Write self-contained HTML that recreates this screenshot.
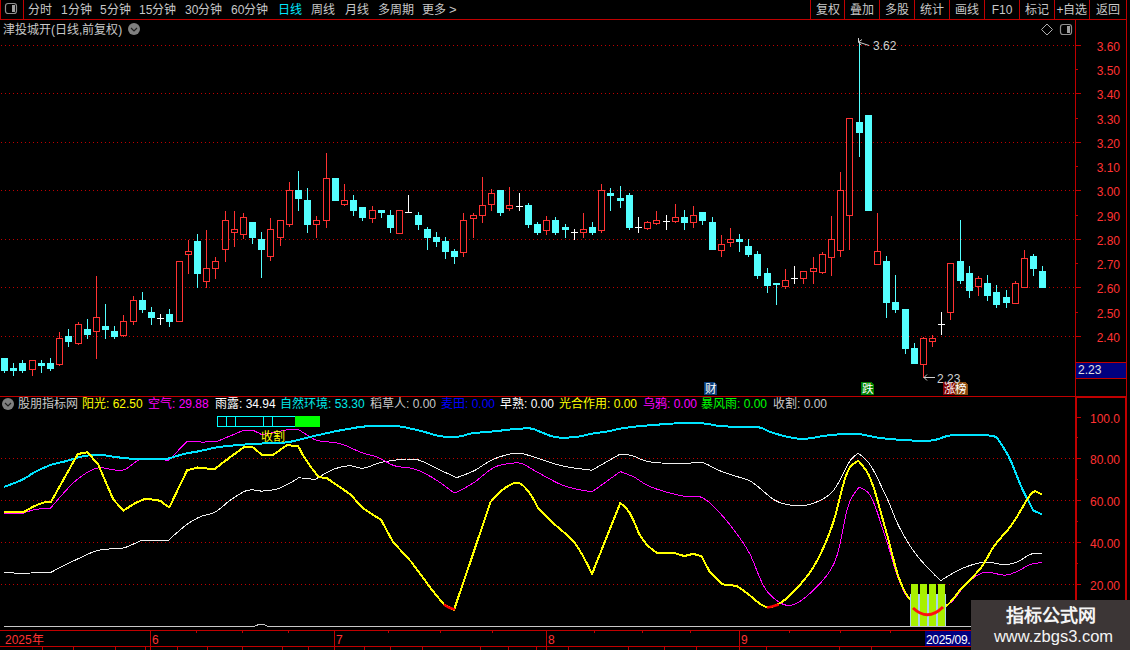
<!DOCTYPE html><html lang="zh-CN"><head><meta charset="utf-8"><style>
html,body{margin:0;padding:0;background:#000;width:1130px;height:650px;overflow:hidden}
body{position:relative;font-family:"Liberation Sans",sans-serif;font-size:12px}
svg{position:absolute;left:0;top:0}
.t{position:absolute;white-space:nowrap;line-height:12px;font-size:12px}
</style></head><body>
<svg width="1130" height="650" viewBox="0 0 1130 650" shape-rendering="crispEdges">
<rect x="0" y="19" width="1127" height="1" fill="#c00000"/>
<rect x="0" y="0" width="1" height="19" fill="#c00000"/>
<rect x="23" y="0" width="1" height="19" fill="#c00000"/>
<rect x="810" y="0" width="1" height="19" fill="#c00000"/>
<rect x="844" y="0" width="1" height="19" fill="#c00000"/>
<rect x="879" y="0" width="1" height="19" fill="#c00000"/>
<rect x="914" y="0" width="1" height="19" fill="#c00000"/>
<rect x="949" y="0" width="1" height="19" fill="#c00000"/>
<rect x="984" y="0" width="1" height="19" fill="#c00000"/>
<rect x="1019" y="0" width="1" height="19" fill="#c00000"/>
<rect x="1054" y="0" width="1" height="19" fill="#c00000"/>
<rect x="1089" y="0" width="1" height="19" fill="#c00000"/>
<rect x="1126" y="0" width="1" height="19" fill="#c00000"/>
<rect x="1126" y="19" width="1" height="631" fill="#c00000"/>
<rect x="1075" y="19" width="1" height="627" fill="#c00000"/>
<rect x="1076" y="397" width="50" height="1" fill="#c00000"/>
<rect x="1076" y="397" width="1" height="233" fill="#c00000"/>
<rect x="1125" y="397" width="1" height="233" fill="#c00000"/>
<rect x="0" y="396" width="1127" height="1" fill="#c00000"/>
<rect x="0" y="630" width="1127" height="1" fill="#c00000"/>
<rect x="0" y="646" width="1127" height="1" fill="#c00000"/>
<defs><pattern id="dp" x="1" y="0" width="4" height="1" patternUnits="userSpaceOnUse"><rect width="1" height="1" fill="#c00000"/></pattern></defs>
<rect x="1" y="45" width="1074" height="1" fill="url(#dp)"/>
<rect x="1075" y="45" width="6" height="1" fill="#c00000"/>
<rect x="1075" y="69" width="3" height="1" fill="#c00000"/>
<rect x="1" y="93" width="1074" height="1" fill="url(#dp)"/>
<rect x="1075" y="93" width="6" height="1" fill="#c00000"/>
<rect x="1075" y="118" width="3" height="1" fill="#c00000"/>
<rect x="1" y="142" width="1074" height="1" fill="url(#dp)"/>
<rect x="1075" y="142" width="6" height="1" fill="#c00000"/>
<rect x="1075" y="166" width="3" height="1" fill="#c00000"/>
<rect x="1" y="190" width="1074" height="1" fill="url(#dp)"/>
<rect x="1075" y="190" width="6" height="1" fill="#c00000"/>
<rect x="1075" y="215" width="3" height="1" fill="#c00000"/>
<rect x="1" y="239" width="1074" height="1" fill="url(#dp)"/>
<rect x="1075" y="239" width="6" height="1" fill="#c00000"/>
<rect x="1075" y="263" width="3" height="1" fill="#c00000"/>
<rect x="1" y="287" width="1074" height="1" fill="url(#dp)"/>
<rect x="1075" y="287" width="6" height="1" fill="#c00000"/>
<rect x="1075" y="312" width="3" height="1" fill="#c00000"/>
<rect x="1" y="336" width="1074" height="1" fill="url(#dp)"/>
<rect x="1075" y="336" width="6" height="1" fill="#c00000"/>
<rect x="1075" y="417" width="6" height="1" fill="#c00000"/>
<rect x="1075" y="437" width="3" height="1" fill="#c00000"/>
<rect x="1" y="458" width="1074" height="1" fill="url(#dp)"/>
<rect x="1075" y="458" width="6" height="1" fill="#c00000"/>
<rect x="1075" y="479" width="3" height="1" fill="#c00000"/>
<rect x="1" y="500" width="1074" height="1" fill="url(#dp)"/>
<rect x="1075" y="500" width="6" height="1" fill="#c00000"/>
<rect x="1075" y="521" width="3" height="1" fill="#c00000"/>
<rect x="1" y="542" width="1074" height="1" fill="url(#dp)"/>
<rect x="1075" y="542" width="6" height="1" fill="#c00000"/>
<rect x="1075" y="563" width="3" height="1" fill="#c00000"/>
<rect x="1" y="584" width="1074" height="1" fill="url(#dp)"/>
<rect x="1075" y="584" width="6" height="1" fill="#c00000"/>
<rect x="4" y="358" width="1" height="15" fill="#54ffff"/>
<rect x="1" y="358" width="7" height="13" fill="#54ffff"/>
<rect x="13" y="363" width="1" height="13" fill="#54ffff"/>
<rect x="10" y="368" width="7" height="3" fill="#54ffff"/>
<rect x="22" y="360" width="1" height="13" fill="#54ffff"/>
<rect x="19" y="363" width="7" height="8" fill="#54ffff"/>
<rect x="32" y="360" width="1" height="16" fill="#ff3232"/>
<rect x="29" y="360" width="7" height="10" fill="#000"/>
<rect x="29" y="360" width="7" height="1" fill="#ff3232"/>
<rect x="29" y="369" width="7" height="1" fill="#ff3232"/>
<rect x="29" y="360" width="1" height="10" fill="#ff3232"/>
<rect x="35" y="360" width="1" height="10" fill="#ff3232"/>
<rect x="41" y="360" width="1" height="13" fill="#54ffff"/>
<rect x="38" y="363" width="7" height="3" fill="#54ffff"/>
<rect x="50" y="358" width="1" height="13" fill="#54ffff"/>
<rect x="47" y="363" width="7" height="6" fill="#54ffff"/>
<rect x="59" y="332" width="1" height="34" fill="#ff3232"/>
<rect x="56" y="338" width="7" height="27" fill="#000"/>
<rect x="56" y="338" width="7" height="1" fill="#ff3232"/>
<rect x="56" y="364" width="7" height="1" fill="#ff3232"/>
<rect x="56" y="338" width="1" height="27" fill="#ff3232"/>
<rect x="62" y="338" width="1" height="27" fill="#ff3232"/>
<rect x="68" y="329" width="1" height="18" fill="#54ffff"/>
<rect x="65" y="336" width="7" height="6" fill="#54ffff"/>
<rect x="78" y="322" width="1" height="23" fill="#ff3232"/>
<rect x="75" y="324" width="7" height="20" fill="#000"/>
<rect x="75" y="324" width="7" height="1" fill="#ff3232"/>
<rect x="75" y="343" width="7" height="1" fill="#ff3232"/>
<rect x="75" y="324" width="1" height="20" fill="#ff3232"/>
<rect x="81" y="324" width="1" height="20" fill="#ff3232"/>
<rect x="87" y="319" width="1" height="20" fill="#54ffff"/>
<rect x="84" y="329" width="7" height="6" fill="#54ffff"/>
<rect x="96" y="276" width="1" height="83" fill="#ff3232"/>
<rect x="93" y="317" width="7" height="15" fill="#000"/>
<rect x="93" y="317" width="7" height="1" fill="#ff3232"/>
<rect x="93" y="331" width="7" height="1" fill="#ff3232"/>
<rect x="93" y="317" width="1" height="15" fill="#ff3232"/>
<rect x="99" y="317" width="1" height="15" fill="#ff3232"/>
<rect x="105" y="304" width="1" height="35" fill="#54ffff"/>
<rect x="102" y="326" width="7" height="4" fill="#54ffff"/>
<rect x="114" y="326" width="1" height="13" fill="#54ffff"/>
<rect x="111" y="331" width="7" height="6" fill="#54ffff"/>
<rect x="123" y="315" width="1" height="22" fill="#ff3232"/>
<rect x="120" y="321" width="7" height="15" fill="#000"/>
<rect x="120" y="321" width="7" height="1" fill="#ff3232"/>
<rect x="120" y="335" width="7" height="1" fill="#ff3232"/>
<rect x="120" y="321" width="1" height="15" fill="#ff3232"/>
<rect x="126" y="321" width="1" height="15" fill="#ff3232"/>
<rect x="133" y="296" width="1" height="29" fill="#ff3232"/>
<rect x="130" y="300" width="7" height="22" fill="#000"/>
<rect x="130" y="300" width="7" height="1" fill="#ff3232"/>
<rect x="130" y="321" width="7" height="1" fill="#ff3232"/>
<rect x="130" y="300" width="1" height="22" fill="#ff3232"/>
<rect x="136" y="300" width="1" height="22" fill="#ff3232"/>
<rect x="142" y="292" width="1" height="21" fill="#54ffff"/>
<rect x="139" y="300" width="7" height="10" fill="#54ffff"/>
<rect x="151" y="307" width="1" height="18" fill="#54ffff"/>
<rect x="148" y="312" width="7" height="6" fill="#54ffff"/>
<rect x="160" y="314" width="1" height="11" fill="#ffffff"/>
<rect x="157" y="318" width="7" height="1" fill="#ffffff"/>
<rect x="169" y="309" width="1" height="18" fill="#54ffff"/>
<rect x="166" y="314" width="7" height="8" fill="#54ffff"/>
<rect x="179" y="261" width="1" height="61" fill="#ff3232"/>
<rect x="176" y="261" width="7" height="61" fill="#000"/>
<rect x="176" y="261" width="7" height="1" fill="#ff3232"/>
<rect x="176" y="321" width="7" height="1" fill="#ff3232"/>
<rect x="176" y="261" width="1" height="61" fill="#ff3232"/>
<rect x="182" y="261" width="1" height="61" fill="#ff3232"/>
<rect x="188" y="240" width="1" height="34" fill="#ff3232"/>
<rect x="185" y="251" width="7" height="4" fill="#000"/>
<rect x="185" y="251" width="7" height="1" fill="#ff3232"/>
<rect x="185" y="254" width="7" height="1" fill="#ff3232"/>
<rect x="185" y="251" width="1" height="4" fill="#ff3232"/>
<rect x="191" y="251" width="1" height="4" fill="#ff3232"/>
<rect x="197" y="234" width="1" height="54" fill="#54ffff"/>
<rect x="194" y="241" width="7" height="33" fill="#54ffff"/>
<rect x="206" y="230" width="1" height="58" fill="#ff3232"/>
<rect x="203" y="268" width="7" height="14" fill="#000"/>
<rect x="203" y="268" width="7" height="1" fill="#ff3232"/>
<rect x="203" y="281" width="7" height="1" fill="#ff3232"/>
<rect x="203" y="268" width="1" height="14" fill="#ff3232"/>
<rect x="209" y="268" width="1" height="14" fill="#ff3232"/>
<rect x="215" y="257" width="1" height="22" fill="#ff3232"/>
<rect x="212" y="261" width="7" height="8" fill="#000"/>
<rect x="212" y="261" width="7" height="1" fill="#ff3232"/>
<rect x="212" y="268" width="7" height="1" fill="#ff3232"/>
<rect x="212" y="261" width="1" height="8" fill="#ff3232"/>
<rect x="218" y="261" width="1" height="8" fill="#ff3232"/>
<rect x="225" y="211" width="1" height="51" fill="#ff3232"/>
<rect x="222" y="220" width="7" height="30" fill="#000"/>
<rect x="222" y="220" width="7" height="1" fill="#ff3232"/>
<rect x="222" y="249" width="7" height="1" fill="#ff3232"/>
<rect x="222" y="220" width="1" height="30" fill="#ff3232"/>
<rect x="228" y="220" width="1" height="30" fill="#ff3232"/>
<rect x="234" y="211" width="1" height="36" fill="#ff3232"/>
<rect x="231" y="229" width="7" height="4" fill="#000"/>
<rect x="231" y="229" width="7" height="1" fill="#ff3232"/>
<rect x="231" y="232" width="7" height="1" fill="#ff3232"/>
<rect x="231" y="229" width="1" height="4" fill="#ff3232"/>
<rect x="237" y="229" width="1" height="4" fill="#ff3232"/>
<rect x="243" y="213" width="1" height="26" fill="#ff3232"/>
<rect x="240" y="217" width="7" height="18" fill="#000"/>
<rect x="240" y="217" width="7" height="1" fill="#ff3232"/>
<rect x="240" y="234" width="7" height="1" fill="#ff3232"/>
<rect x="240" y="217" width="1" height="18" fill="#ff3232"/>
<rect x="246" y="217" width="1" height="18" fill="#ff3232"/>
<rect x="252" y="222" width="1" height="22" fill="#54ffff"/>
<rect x="249" y="222" width="7" height="16" fill="#54ffff"/>
<rect x="261" y="232" width="1" height="46" fill="#54ffff"/>
<rect x="258" y="239" width="7" height="11" fill="#54ffff"/>
<rect x="270" y="218" width="1" height="43" fill="#ff3232"/>
<rect x="267" y="229" width="7" height="28" fill="#000"/>
<rect x="267" y="229" width="7" height="1" fill="#ff3232"/>
<rect x="267" y="256" width="7" height="1" fill="#ff3232"/>
<rect x="267" y="229" width="1" height="28" fill="#ff3232"/>
<rect x="273" y="229" width="1" height="28" fill="#ff3232"/>
<rect x="280" y="220" width="1" height="26" fill="#ff3232"/>
<rect x="277" y="220" width="7" height="18" fill="#000"/>
<rect x="277" y="220" width="7" height="1" fill="#ff3232"/>
<rect x="277" y="237" width="7" height="1" fill="#ff3232"/>
<rect x="277" y="220" width="1" height="18" fill="#ff3232"/>
<rect x="283" y="220" width="1" height="18" fill="#ff3232"/>
<rect x="289" y="182" width="1" height="45" fill="#ff3232"/>
<rect x="286" y="190" width="7" height="35" fill="#000"/>
<rect x="286" y="190" width="7" height="1" fill="#ff3232"/>
<rect x="286" y="224" width="7" height="1" fill="#ff3232"/>
<rect x="286" y="190" width="1" height="35" fill="#ff3232"/>
<rect x="292" y="190" width="1" height="35" fill="#ff3232"/>
<rect x="298" y="171" width="1" height="40" fill="#54ffff"/>
<rect x="295" y="190" width="7" height="9" fill="#54ffff"/>
<rect x="307" y="188" width="1" height="45" fill="#54ffff"/>
<rect x="304" y="200" width="7" height="25" fill="#54ffff"/>
<rect x="316" y="216" width="1" height="22" fill="#ff3232"/>
<rect x="313" y="220" width="7" height="5" fill="#000"/>
<rect x="313" y="220" width="7" height="1" fill="#ff3232"/>
<rect x="313" y="224" width="7" height="1" fill="#ff3232"/>
<rect x="313" y="220" width="1" height="5" fill="#ff3232"/>
<rect x="319" y="220" width="1" height="5" fill="#ff3232"/>
<rect x="326" y="153" width="1" height="75" fill="#ff3232"/>
<rect x="323" y="178" width="7" height="43" fill="#000"/>
<rect x="323" y="178" width="7" height="1" fill="#ff3232"/>
<rect x="323" y="220" width="7" height="1" fill="#ff3232"/>
<rect x="323" y="178" width="1" height="43" fill="#ff3232"/>
<rect x="329" y="178" width="1" height="43" fill="#ff3232"/>
<rect x="335" y="178" width="1" height="23" fill="#54ffff"/>
<rect x="332" y="178" width="7" height="23" fill="#54ffff"/>
<rect x="344" y="184" width="1" height="22" fill="#ff3232"/>
<rect x="341" y="200" width="7" height="5" fill="#000"/>
<rect x="341" y="200" width="7" height="1" fill="#ff3232"/>
<rect x="341" y="204" width="7" height="1" fill="#ff3232"/>
<rect x="341" y="200" width="1" height="5" fill="#ff3232"/>
<rect x="347" y="200" width="1" height="5" fill="#ff3232"/>
<rect x="353" y="195" width="1" height="21" fill="#54ffff"/>
<rect x="350" y="200" width="7" height="11" fill="#54ffff"/>
<rect x="362" y="207" width="1" height="14" fill="#54ffff"/>
<rect x="359" y="207" width="7" height="11" fill="#54ffff"/>
<rect x="372" y="206" width="1" height="17" fill="#ff3232"/>
<rect x="369" y="210" width="7" height="9" fill="#000"/>
<rect x="369" y="210" width="7" height="1" fill="#ff3232"/>
<rect x="369" y="218" width="7" height="1" fill="#ff3232"/>
<rect x="369" y="210" width="1" height="9" fill="#ff3232"/>
<rect x="375" y="210" width="1" height="9" fill="#ff3232"/>
<rect x="381" y="210" width="1" height="8" fill="#54ffff"/>
<rect x="378" y="210" width="7" height="3" fill="#54ffff"/>
<rect x="390" y="210" width="1" height="23" fill="#54ffff"/>
<rect x="387" y="215" width="7" height="13" fill="#54ffff"/>
<rect x="399" y="210" width="1" height="24" fill="#ff3232"/>
<rect x="396" y="210" width="7" height="24" fill="#000"/>
<rect x="396" y="210" width="7" height="1" fill="#ff3232"/>
<rect x="396" y="233" width="7" height="1" fill="#ff3232"/>
<rect x="396" y="210" width="1" height="24" fill="#ff3232"/>
<rect x="402" y="210" width="1" height="24" fill="#ff3232"/>
<rect x="408" y="195" width="1" height="18" fill="#ffffff"/>
<rect x="405" y="212" width="7" height="1" fill="#ffffff"/>
<rect x="418" y="212" width="1" height="18" fill="#54ffff"/>
<rect x="415" y="215" width="7" height="10" fill="#54ffff"/>
<rect x="427" y="227" width="1" height="23" fill="#54ffff"/>
<rect x="424" y="229" width="7" height="9" fill="#54ffff"/>
<rect x="436" y="232" width="1" height="15" fill="#54ffff"/>
<rect x="433" y="237" width="7" height="5" fill="#54ffff"/>
<rect x="445" y="237" width="1" height="22" fill="#54ffff"/>
<rect x="442" y="241" width="7" height="11" fill="#54ffff"/>
<rect x="454" y="249" width="1" height="15" fill="#54ffff"/>
<rect x="451" y="251" width="7" height="6" fill="#54ffff"/>
<rect x="463" y="213" width="1" height="44" fill="#ff3232"/>
<rect x="460" y="220" width="7" height="33" fill="#000"/>
<rect x="460" y="220" width="7" height="1" fill="#ff3232"/>
<rect x="460" y="252" width="7" height="1" fill="#ff3232"/>
<rect x="460" y="220" width="1" height="33" fill="#ff3232"/>
<rect x="466" y="220" width="1" height="33" fill="#ff3232"/>
<rect x="473" y="213" width="1" height="25" fill="#ff3232"/>
<rect x="470" y="215" width="7" height="4" fill="#000"/>
<rect x="470" y="215" width="7" height="1" fill="#ff3232"/>
<rect x="470" y="218" width="7" height="1" fill="#ff3232"/>
<rect x="470" y="215" width="1" height="4" fill="#ff3232"/>
<rect x="476" y="215" width="1" height="4" fill="#ff3232"/>
<rect x="482" y="177" width="1" height="46" fill="#ff3232"/>
<rect x="479" y="205" width="7" height="11" fill="#000"/>
<rect x="479" y="205" width="7" height="1" fill="#ff3232"/>
<rect x="479" y="215" width="7" height="1" fill="#ff3232"/>
<rect x="479" y="205" width="1" height="11" fill="#ff3232"/>
<rect x="485" y="205" width="1" height="11" fill="#ff3232"/>
<rect x="491" y="189" width="1" height="22" fill="#ff3232"/>
<rect x="488" y="193" width="7" height="12" fill="#000"/>
<rect x="488" y="193" width="7" height="1" fill="#ff3232"/>
<rect x="488" y="204" width="7" height="1" fill="#ff3232"/>
<rect x="488" y="193" width="1" height="12" fill="#ff3232"/>
<rect x="494" y="193" width="1" height="12" fill="#ff3232"/>
<rect x="500" y="190" width="1" height="26" fill="#54ffff"/>
<rect x="497" y="190" width="7" height="23" fill="#54ffff"/>
<rect x="509" y="187" width="1" height="24" fill="#ff3232"/>
<rect x="506" y="205" width="7" height="4" fill="#000"/>
<rect x="506" y="205" width="7" height="1" fill="#ff3232"/>
<rect x="506" y="208" width="7" height="1" fill="#ff3232"/>
<rect x="506" y="205" width="1" height="4" fill="#ff3232"/>
<rect x="512" y="205" width="1" height="4" fill="#ff3232"/>
<rect x="519" y="193" width="1" height="18" fill="#ffffff"/>
<rect x="516" y="206" width="7" height="1" fill="#ffffff"/>
<rect x="528" y="203" width="1" height="25" fill="#54ffff"/>
<rect x="525" y="205" width="7" height="20" fill="#54ffff"/>
<rect x="537" y="222" width="1" height="13" fill="#54ffff"/>
<rect x="534" y="224" width="7" height="9" fill="#54ffff"/>
<rect x="546" y="216" width="1" height="19" fill="#ff3232"/>
<rect x="543" y="220" width="7" height="11" fill="#000"/>
<rect x="543" y="220" width="7" height="1" fill="#ff3232"/>
<rect x="543" y="230" width="7" height="1" fill="#ff3232"/>
<rect x="543" y="220" width="1" height="11" fill="#ff3232"/>
<rect x="549" y="220" width="1" height="11" fill="#ff3232"/>
<rect x="555" y="217" width="1" height="18" fill="#54ffff"/>
<rect x="552" y="220" width="7" height="13" fill="#54ffff"/>
<rect x="565" y="224" width="1" height="14" fill="#54ffff"/>
<rect x="562" y="227" width="7" height="3" fill="#54ffff"/>
<rect x="574" y="229" width="1" height="11" fill="#ffffff"/>
<rect x="571" y="232" width="7" height="1" fill="#ffffff"/>
<rect x="583" y="213" width="1" height="25" fill="#ff3232"/>
<rect x="580" y="229" width="7" height="4" fill="#000"/>
<rect x="580" y="229" width="7" height="1" fill="#ff3232"/>
<rect x="580" y="232" width="7" height="1" fill="#ff3232"/>
<rect x="580" y="229" width="1" height="4" fill="#ff3232"/>
<rect x="586" y="229" width="1" height="4" fill="#ff3232"/>
<rect x="592" y="222" width="1" height="13" fill="#54ffff"/>
<rect x="589" y="227" width="7" height="6" fill="#54ffff"/>
<rect x="601" y="184" width="1" height="49" fill="#ff3232"/>
<rect x="598" y="190" width="7" height="41" fill="#000"/>
<rect x="598" y="190" width="7" height="1" fill="#ff3232"/>
<rect x="598" y="230" width="7" height="1" fill="#ff3232"/>
<rect x="598" y="190" width="1" height="41" fill="#ff3232"/>
<rect x="604" y="190" width="1" height="41" fill="#ff3232"/>
<rect x="610" y="188" width="1" height="23" fill="#54ffff"/>
<rect x="607" y="193" width="7" height="3" fill="#54ffff"/>
<rect x="620" y="186" width="1" height="22" fill="#54ffff"/>
<rect x="617" y="198" width="7" height="3" fill="#54ffff"/>
<rect x="629" y="193" width="1" height="37" fill="#54ffff"/>
<rect x="626" y="195" width="7" height="33" fill="#54ffff"/>
<rect x="638" y="217" width="1" height="16" fill="#ffffff"/>
<rect x="635" y="227" width="7" height="1" fill="#ffffff"/>
<rect x="647" y="221" width="1" height="9" fill="#ff3232"/>
<rect x="644" y="222" width="7" height="7" fill="#000"/>
<rect x="644" y="222" width="7" height="1" fill="#ff3232"/>
<rect x="644" y="228" width="7" height="1" fill="#ff3232"/>
<rect x="644" y="222" width="1" height="7" fill="#ff3232"/>
<rect x="650" y="222" width="1" height="7" fill="#ff3232"/>
<rect x="656" y="211" width="1" height="14" fill="#ff3232"/>
<rect x="653" y="220" width="7" height="4" fill="#000"/>
<rect x="653" y="220" width="7" height="1" fill="#ff3232"/>
<rect x="653" y="223" width="7" height="1" fill="#ff3232"/>
<rect x="653" y="220" width="1" height="4" fill="#ff3232"/>
<rect x="659" y="220" width="1" height="4" fill="#ff3232"/>
<rect x="666" y="215" width="1" height="15" fill="#ffffff"/>
<rect x="663" y="221" width="7" height="1" fill="#ffffff"/>
<rect x="675" y="204" width="1" height="19" fill="#ff3232"/>
<rect x="672" y="217" width="7" height="5" fill="#000"/>
<rect x="672" y="217" width="7" height="1" fill="#ff3232"/>
<rect x="672" y="221" width="7" height="1" fill="#ff3232"/>
<rect x="672" y="217" width="1" height="5" fill="#ff3232"/>
<rect x="678" y="217" width="1" height="5" fill="#ff3232"/>
<rect x="684" y="210" width="1" height="20" fill="#54ffff"/>
<rect x="681" y="217" width="7" height="6" fill="#54ffff"/>
<rect x="693" y="206" width="1" height="22" fill="#ff3232"/>
<rect x="690" y="215" width="7" height="8" fill="#000"/>
<rect x="690" y="215" width="7" height="1" fill="#ff3232"/>
<rect x="690" y="222" width="7" height="1" fill="#ff3232"/>
<rect x="690" y="215" width="1" height="8" fill="#ff3232"/>
<rect x="696" y="215" width="1" height="8" fill="#ff3232"/>
<rect x="702" y="212" width="1" height="13" fill="#54ffff"/>
<rect x="699" y="212" width="7" height="9" fill="#54ffff"/>
<rect x="712" y="217" width="1" height="33" fill="#54ffff"/>
<rect x="709" y="222" width="7" height="28" fill="#54ffff"/>
<rect x="721" y="235" width="1" height="22" fill="#ff3232"/>
<rect x="718" y="244" width="7" height="7" fill="#000"/>
<rect x="718" y="244" width="7" height="1" fill="#ff3232"/>
<rect x="718" y="250" width="7" height="1" fill="#ff3232"/>
<rect x="718" y="244" width="1" height="7" fill="#ff3232"/>
<rect x="724" y="244" width="1" height="7" fill="#ff3232"/>
<rect x="730" y="228" width="1" height="19" fill="#ff3232"/>
<rect x="727" y="239" width="7" height="4" fill="#000"/>
<rect x="727" y="239" width="7" height="1" fill="#ff3232"/>
<rect x="727" y="242" width="7" height="1" fill="#ff3232"/>
<rect x="727" y="239" width="1" height="4" fill="#ff3232"/>
<rect x="733" y="239" width="1" height="4" fill="#ff3232"/>
<rect x="739" y="234" width="1" height="18" fill="#54ffff"/>
<rect x="736" y="239" width="7" height="3" fill="#54ffff"/>
<rect x="748" y="239" width="1" height="18" fill="#54ffff"/>
<rect x="745" y="246" width="7" height="9" fill="#54ffff"/>
<rect x="757" y="251" width="1" height="28" fill="#54ffff"/>
<rect x="754" y="254" width="7" height="22" fill="#54ffff"/>
<rect x="767" y="268" width="1" height="25" fill="#54ffff"/>
<rect x="764" y="273" width="7" height="13" fill="#54ffff"/>
<rect x="776" y="283" width="1" height="22" fill="#54ffff"/>
<rect x="773" y="283" width="7" height="2" fill="#54ffff"/>
<rect x="785" y="269" width="1" height="20" fill="#ff3232"/>
<rect x="782" y="280" width="7" height="7" fill="#000"/>
<rect x="782" y="280" width="7" height="1" fill="#ff3232"/>
<rect x="782" y="286" width="7" height="1" fill="#ff3232"/>
<rect x="782" y="280" width="1" height="7" fill="#ff3232"/>
<rect x="788" y="280" width="1" height="7" fill="#ff3232"/>
<rect x="794" y="266" width="1" height="18" fill="#ffffff"/>
<rect x="791" y="278" width="7" height="1" fill="#ffffff"/>
<rect x="803" y="271" width="1" height="13" fill="#ff3232"/>
<rect x="800" y="271" width="7" height="8" fill="#000"/>
<rect x="800" y="271" width="7" height="1" fill="#ff3232"/>
<rect x="800" y="278" width="7" height="1" fill="#ff3232"/>
<rect x="800" y="271" width="1" height="8" fill="#ff3232"/>
<rect x="806" y="271" width="1" height="8" fill="#ff3232"/>
<rect x="813" y="257" width="1" height="27" fill="#ff3232"/>
<rect x="810" y="268" width="7" height="4" fill="#000"/>
<rect x="810" y="268" width="7" height="1" fill="#ff3232"/>
<rect x="810" y="271" width="7" height="1" fill="#ff3232"/>
<rect x="810" y="268" width="1" height="4" fill="#ff3232"/>
<rect x="816" y="268" width="1" height="4" fill="#ff3232"/>
<rect x="822" y="252" width="1" height="22" fill="#ff3232"/>
<rect x="819" y="254" width="7" height="19" fill="#000"/>
<rect x="819" y="254" width="7" height="1" fill="#ff3232"/>
<rect x="819" y="272" width="7" height="1" fill="#ff3232"/>
<rect x="819" y="254" width="1" height="19" fill="#ff3232"/>
<rect x="825" y="254" width="1" height="19" fill="#ff3232"/>
<rect x="831" y="216" width="1" height="60" fill="#ff3232"/>
<rect x="828" y="239" width="7" height="19" fill="#000"/>
<rect x="828" y="239" width="7" height="1" fill="#ff3232"/>
<rect x="828" y="257" width="7" height="1" fill="#ff3232"/>
<rect x="828" y="239" width="1" height="19" fill="#ff3232"/>
<rect x="834" y="239" width="1" height="19" fill="#ff3232"/>
<rect x="840" y="172" width="1" height="85" fill="#ff3232"/>
<rect x="837" y="190" width="7" height="61" fill="#000"/>
<rect x="837" y="190" width="7" height="1" fill="#ff3232"/>
<rect x="837" y="250" width="7" height="1" fill="#ff3232"/>
<rect x="837" y="190" width="1" height="61" fill="#ff3232"/>
<rect x="843" y="190" width="1" height="61" fill="#ff3232"/>
<rect x="849" y="118" width="1" height="132" fill="#ff3232"/>
<rect x="846" y="118" width="7" height="98" fill="#000"/>
<rect x="846" y="118" width="7" height="1" fill="#ff3232"/>
<rect x="846" y="215" width="7" height="1" fill="#ff3232"/>
<rect x="846" y="118" width="1" height="98" fill="#ff3232"/>
<rect x="852" y="118" width="1" height="98" fill="#ff3232"/>
<rect x="859" y="42" width="1" height="115" fill="#54ffff"/>
<rect x="856" y="122" width="7" height="11" fill="#54ffff"/>
<rect x="868" y="115" width="1" height="96" fill="#54ffff"/>
<rect x="865" y="115" width="7" height="96" fill="#54ffff"/>
<rect x="877" y="213" width="1" height="52" fill="#ff3232"/>
<rect x="874" y="251" width="7" height="14" fill="#000"/>
<rect x="874" y="251" width="7" height="1" fill="#ff3232"/>
<rect x="874" y="264" width="7" height="1" fill="#ff3232"/>
<rect x="874" y="251" width="1" height="14" fill="#ff3232"/>
<rect x="880" y="251" width="1" height="14" fill="#ff3232"/>
<rect x="886" y="256" width="1" height="62" fill="#54ffff"/>
<rect x="883" y="261" width="7" height="42" fill="#54ffff"/>
<rect x="895" y="275" width="1" height="38" fill="#54ffff"/>
<rect x="892" y="302" width="7" height="8" fill="#54ffff"/>
<rect x="905" y="309" width="1" height="45" fill="#54ffff"/>
<rect x="902" y="309" width="7" height="40" fill="#54ffff"/>
<rect x="914" y="343" width="1" height="21" fill="#54ffff"/>
<rect x="911" y="348" width="7" height="16" fill="#54ffff"/>
<rect x="923" y="337" width="1" height="41" fill="#ff3232"/>
<rect x="920" y="338" width="7" height="27" fill="#000"/>
<rect x="920" y="338" width="7" height="1" fill="#ff3232"/>
<rect x="920" y="364" width="7" height="1" fill="#ff3232"/>
<rect x="920" y="338" width="1" height="27" fill="#ff3232"/>
<rect x="926" y="338" width="1" height="27" fill="#ff3232"/>
<rect x="932" y="335" width="1" height="12" fill="#ff3232"/>
<rect x="929" y="338" width="7" height="4" fill="#000"/>
<rect x="929" y="338" width="7" height="1" fill="#ff3232"/>
<rect x="929" y="341" width="7" height="1" fill="#ff3232"/>
<rect x="929" y="338" width="1" height="4" fill="#ff3232"/>
<rect x="935" y="338" width="1" height="4" fill="#ff3232"/>
<rect x="941" y="312" width="1" height="23" fill="#ffffff"/>
<rect x="938" y="324" width="7" height="1" fill="#ffffff"/>
<rect x="950" y="263" width="1" height="57" fill="#ff3232"/>
<rect x="947" y="263" width="7" height="50" fill="#000"/>
<rect x="947" y="263" width="7" height="1" fill="#ff3232"/>
<rect x="947" y="312" width="7" height="1" fill="#ff3232"/>
<rect x="947" y="263" width="1" height="50" fill="#ff3232"/>
<rect x="953" y="263" width="1" height="50" fill="#ff3232"/>
<rect x="960" y="220" width="1" height="64" fill="#54ffff"/>
<rect x="957" y="261" width="7" height="20" fill="#54ffff"/>
<rect x="969" y="266" width="1" height="32" fill="#54ffff"/>
<rect x="966" y="273" width="7" height="18" fill="#54ffff"/>
<rect x="978" y="276" width="1" height="20" fill="#ff3232"/>
<rect x="975" y="278" width="7" height="9" fill="#000"/>
<rect x="975" y="278" width="7" height="1" fill="#ff3232"/>
<rect x="975" y="286" width="7" height="1" fill="#ff3232"/>
<rect x="975" y="278" width="1" height="9" fill="#ff3232"/>
<rect x="981" y="278" width="1" height="9" fill="#ff3232"/>
<rect x="987" y="275" width="1" height="26" fill="#54ffff"/>
<rect x="984" y="283" width="7" height="13" fill="#54ffff"/>
<rect x="996" y="285" width="1" height="23" fill="#54ffff"/>
<rect x="993" y="292" width="7" height="13" fill="#54ffff"/>
<rect x="1006" y="290" width="1" height="18" fill="#54ffff"/>
<rect x="1003" y="297" width="7" height="6" fill="#54ffff"/>
<rect x="1015" y="281" width="1" height="23" fill="#ff3232"/>
<rect x="1012" y="283" width="7" height="21" fill="#000"/>
<rect x="1012" y="283" width="7" height="1" fill="#ff3232"/>
<rect x="1012" y="303" width="7" height="1" fill="#ff3232"/>
<rect x="1012" y="283" width="1" height="21" fill="#ff3232"/>
<rect x="1018" y="283" width="1" height="21" fill="#ff3232"/>
<rect x="1024" y="250" width="1" height="38" fill="#ff3232"/>
<rect x="1021" y="258" width="7" height="30" fill="#000"/>
<rect x="1021" y="258" width="7" height="1" fill="#ff3232"/>
<rect x="1021" y="287" width="7" height="1" fill="#ff3232"/>
<rect x="1021" y="258" width="1" height="30" fill="#ff3232"/>
<rect x="1027" y="258" width="1" height="30" fill="#ff3232"/>
<rect x="1033" y="254" width="1" height="22" fill="#54ffff"/>
<rect x="1030" y="256" width="7" height="13" fill="#54ffff"/>
<rect x="1042" y="266" width="1" height="22" fill="#54ffff"/>
<rect x="1039" y="271" width="7" height="17" fill="#54ffff"/>
<polyline points="4,626.5 254,626.5 256,625.5 259,624.5 264,624.5 266,625.5 268,626.5 1042,626.5" fill="none" stroke="#c8c8c8" stroke-width="1" shape-rendering="crispEdges"/>
<polyline points="4.0,572.4 4.7,572.4 6.5,572.6 9.1,572.7 12.0,572.9 14.9,573.1 17.5,573.2 19.3,573.4 20.0,573.4 20.4,573.4 21.5,573.4 23.2,573.3 25.4,573.2 28.0,573.1 30.8,573.0 33.8,572.9 36.9,572.9 39.9,572.8 42.7,572.7 45.3,572.6 47.5,572.5 49.2,572.4 50.3,572.4 50.7,572.4 51.0,572.2 51.9,571.8 53.3,571.1 55.2,570.1 57.3,569.0 59.8,567.8 62.4,566.4 65.2,565.0 68.0,563.7 70.7,562.3 73.3,561.0 75.7,559.9 77.8,558.9 79.9,557.9 82.0,556.9 84.1,555.9 86.1,555.0 88.1,554.0 90.1,553.2 92.1,552.4 94.1,551.6 96.0,551.0 98.0,550.4 100.2,549.9 102.4,549.6 104.7,549.3 106.9,549.2 109.1,549.0 111.2,548.9 113.2,548.8 115.0,548.7 117.3,548.6 119.3,548.5 121.2,548.4 123.5,548.0 125.5,547.4 127.9,546.5 130.5,545.4 133.3,544.1 136.0,542.9 138.3,541.8 140.2,540.9 141.5,540.2 142.0,540.0 142.4,540.0 143.7,540.0 145.6,540.0 148.0,540.0 150.8,540.1 153.8,540.1 156.8,540.1 159.8,540.1 162.6,540.2 165.0,540.2 166.9,540.2 168.2,540.2 168.6,540.2 169.0,539.8 170.3,538.7 172.1,537.0 174.4,534.9 177.0,532.6 179.8,530.3 182.5,528.0 185.0,525.9 187.2,524.3 189.5,522.7 191.8,521.3 194.0,520.0 196.2,518.7 198.4,517.6 200.7,516.6 202.9,515.8 205.2,515.2 207.4,514.7 209.7,514.2 212.0,513.5 214.3,512.5 216.4,511.3 218.5,509.8 220.6,508.2 222.7,506.4 224.8,504.6 226.9,502.8 229.0,501.1 231.2,499.6 233.3,498.2 235.4,496.8 237.5,495.4 239.7,494.0 241.8,492.8 243.9,491.7 246.0,490.8 248.1,490.2 250.7,489.9 253.6,490.0 256.6,490.3 259.1,490.7 260.9,491.1 261.6,491.2 262.1,491.2 263.4,491.0 265.5,490.9 267.9,490.6 270.7,490.2 273.5,489.7 276.2,489.2 278.6,488.5 280.8,487.7 283.3,486.5 285.9,485.2 288.6,483.7 291.2,482.3 293.7,480.9 295.8,479.6 297.4,478.6 298.5,477.9 298.9,477.7 299.6,477.8 301.4,478.0 304.1,478.2 307.0,478.5 310.0,478.9 312.7,479.1 314.5,479.3 315.2,479.4 315.6,479.1 316.8,478.4 318.6,477.3 320.9,475.9 323.5,474.4 326.2,472.9 328.9,471.4 331.5,470.1 333.8,469.2 335.9,468.5 338.1,467.8 340.3,467.2 342.4,466.7 344.6,466.3 346.7,466.0 348.7,465.9 350.7,465.8 353.2,466.1 355.5,466.7 357.8,467.5 360.1,468.0 362.6,468.2 364.5,468.0 366.4,467.5 368.4,466.9 370.4,466.2 372.4,465.3 374.6,464.5 376.7,463.7 378.9,463.0 381.2,462.4 383.1,462.0 385.2,461.6 387.3,461.2 389.6,460.9 391.8,460.5 394.1,460.2 396.4,459.9 398.6,459.7 400.7,459.5 402.8,459.3 404.8,459.1 406.6,459.0 408.3,459.0 410.6,459.0 412.5,459.0 414.3,459.2 416.2,459.5 418.4,460.0 420.2,460.6 422.2,461.3 424.3,462.2 426.5,463.2 428.8,464.3 431.1,465.5 433.4,466.6 435.7,467.8 437.9,468.9 440.0,470.0 442.0,470.9 444.6,472.1 447.3,473.4 450.1,474.6 452.7,475.8 454.8,476.8 456.3,477.5 456.8,477.7 457.3,477.5 458.6,477.0 460.6,476.3 463.1,475.4 465.8,474.3 468.6,473.2 471.3,472.0 473.7,470.9 475.7,469.9 477.6,468.7 479.6,467.5 481.6,466.2 483.6,464.8 485.6,463.5 487.7,462.3 489.7,461.1 491.8,460.0 494.0,459.0 496.0,458.2 498.1,457.4 500.3,456.7 502.5,456.0 504.7,455.3 506.9,454.7 509.1,454.2 511.3,453.8 513.5,453.5 515.6,453.4 517.7,453.3 519.8,453.4 521.8,453.7 523.9,454.0 525.9,454.5 527.9,455.1 529.9,455.8 531.9,456.4 533.9,457.1 535.9,457.8 538.0,458.4 540.1,459.0 542.1,459.7 544.2,460.4 546.3,461.1 548.4,461.8 550.5,462.5 552.7,463.3 554.9,464.0 557.1,464.6 559.3,465.2 561.6,465.8 563.6,466.2 565.9,466.7 568.4,467.1 571.0,467.5 573.7,467.9 576.4,468.3 579.0,468.6 581.6,469.0 584.0,469.3 586.2,469.5 588.1,469.8 589.7,469.9 591.0,470.1 591.7,470.2 592.0,470.2 592.4,470.0 593.6,469.3 595.3,468.3 597.6,467.0 600.3,465.5 603.1,463.8 606.2,462.1 609.2,460.4 612.0,458.7 614.7,457.2 617.0,455.9 618.7,454.9 619.9,454.2 620.3,454.0 621.1,454.1 623.3,454.3 626.2,454.6 629.3,455.1 632.1,455.7 634.1,456.3 636.1,457.1 638.2,458.0 640.2,459.0 642.4,459.9 644.8,460.7 647.4,461.4 649.1,461.7 650.9,462.0 652.8,462.3 654.8,462.5 656.9,462.7 659.1,462.8 661.3,463.0 663.6,463.1 665.8,463.2 668.1,463.3 670.4,463.4 672.6,463.4 674.8,463.5 677.0,463.5 679.0,463.5 681.0,463.5 682.9,463.5 684.6,463.5 687.0,463.4 689.3,463.2 691.5,462.9 693.5,462.6 695.5,462.3 697.5,462.1 699.5,462.2 701.5,462.4 703.7,462.9 705.8,463.8 707.9,464.7 710.0,465.8 712.1,467.0 714.2,468.2 716.3,469.3 718.4,470.2 720.5,471.0 722.6,471.8 724.8,472.5 726.9,473.2 729.0,473.9 731.1,474.6 733.2,475.3 735.3,476.0 737.4,476.7 739.5,477.3 741.5,477.8 743.5,478.4 745.6,479.1 747.8,479.9 750.0,481.0 751.9,482.1 753.8,483.4 755.9,485.0 758.0,486.7 760.1,488.5 762.3,490.3 764.4,492.2 766.6,494.0 768.8,495.8 770.9,497.5 773.0,499.0 775.0,500.3 777.0,501.3 779.2,502.3 781.4,503.1 783.5,503.7 785.6,504.2 787.7,504.7 789.8,505.0 791.9,505.2 794.0,505.4 796.1,505.5 798.2,505.6 800.3,505.6 802.4,505.5 804.5,505.3 806.6,505.0 808.8,504.6 810.9,504.0 812.9,503.4 815.0,502.6 817.1,501.8 819.2,500.9 821.3,499.9 823.3,498.8 825.4,497.5 827.4,496.1 829.3,494.6 831.2,492.9 833.6,490.3 835.8,487.1 838.1,483.4 840.2,479.5 842.3,475.5 844.3,471.5 846.2,467.7 848.1,464.2 849.8,461.3 851.5,459.0 854.4,456.2 857.1,454.1 858.3,453.3 859.0,453.8 860.9,455.2 863.4,457.3 866.0,459.8 868.4,462.4 870.5,465.4 872.6,468.9 874.8,472.8 877.0,477.1 879.1,481.5 881.2,486.0 883.3,490.4 885.3,494.6 887.5,499.4 889.6,504.3 891.6,509.2 893.6,514.2 895.6,519.1 897.7,523.8 900.0,528.4 901.9,532.0 903.9,535.5 905.9,539.0 907.9,542.4 910.0,545.7 912.2,549.0 914.5,552.3 916.9,555.5 919.0,558.1 921.5,561.0 924.2,564.0 927.1,567.0 929.9,570.1 932.7,572.9 935.2,575.5 937.4,577.6 939.1,579.3 940.2,580.4 940.6,580.8 941.0,580.6 942.0,579.9 943.6,578.8 945.7,577.5 948.0,576.1 950.6,574.5 953.3,572.9 956.0,571.4 958.6,570.1 960.9,569.0 962.9,568.1 965.1,567.3 967.2,566.5 969.4,565.7 971.6,565.0 973.8,564.3 976.0,563.7 978.2,563.2 980.3,562.8 982.5,562.4 984.6,562.2 986.7,562.1 988.8,562.3 991.0,562.5 993.1,562.9 995.2,563.3 997.2,563.7 999.3,564.1 1001.2,564.4 1003.1,564.6 1004.9,564.6 1007.5,564.4 1009.8,564.1 1012.1,563.6 1014.3,563.0 1016.7,562.2 1018.8,561.2 1021.1,560.0 1023.3,558.5 1025.5,557.0 1027.8,555.7 1029.9,554.6 1032.0,553.8 1034.4,553.4 1037.1,553.4 1039.6,553.5 1041.4,553.7 1042.1,553.8" fill="none" stroke="#f0f0f0" stroke-width="1" stroke-linejoin="round" shape-rendering="crispEdges"/>
<polyline points="4.0,513.0 4.7,513.0 6.5,513.0 9.1,513.0 12.2,513.0 15.5,513.0 18.6,513.0 21.2,513.0 23.0,513.0 23.7,513.0 24.4,512.7 26.1,512.1 28.6,511.3 31.3,510.4 33.8,509.8 35.9,509.4 38.5,509.1 41.3,508.8 44.1,508.5 46.6,508.3 48.7,508.1 50.2,508.0 50.7,508.0 51.0,507.6 51.9,506.6 53.3,504.9 55.1,502.8 57.2,500.3 59.6,497.5 62.2,494.6 65.0,491.6 67.7,488.6 70.5,485.8 73.1,483.1 75.6,480.8 77.8,479.0 79.8,477.4 81.9,476.0 83.9,474.5 85.9,473.2 88.0,472.0 90.0,470.9 92.0,469.9 94.0,469.1 96.0,468.5 98.0,468.0 100.2,467.8 102.4,467.8 104.7,468.1 106.9,468.5 109.1,469.0 111.2,469.4 113.2,469.8 115.0,470.0 117.3,470.2 119.3,470.4 121.3,470.4 123.5,470.0 125.3,469.3 127.1,468.2 129.0,466.9 131.0,465.4 133.1,463.8 135.2,462.3 137.4,460.9 139.7,459.8 142.0,459.0 144.0,458.7 146.3,458.5 148.8,458.5 151.5,458.6 154.2,458.7 156.9,459.0 159.5,459.3 162.0,459.6 164.1,459.9 166.0,460.2 167.4,460.5 168.3,460.6 168.6,460.7 169.2,460.0 170.9,458.2 173.4,455.6 176.4,452.5 179.4,449.2 182.4,446.1 184.9,443.5 186.6,441.7 187.2,441.0 187.9,441.1 189.7,441.2 192.2,441.5 195.1,441.7 198.1,441.9 200.7,442.0 202.9,442.0 205.4,442.0 208.0,441.9 210.6,441.8 213.0,441.8 214.9,441.7 216.2,441.6 216.7,441.6 217.1,441.4 218.4,440.9 220.3,440.1 222.7,439.1 225.5,437.9 228.5,436.6 231.6,435.4 234.6,434.1 237.4,432.9 239.8,431.9 241.7,431.1 243.0,430.6 243.4,430.4 244.9,430.4 248.4,430.4 251.8,430.4 253.3,430.4 254.7,431.1 257.6,432.5 260.6,434.0 262.0,434.7 262.5,434.6 263.8,434.3 265.9,433.9 268.4,433.4 271.3,432.9 274.4,432.3 277.4,431.6 280.3,431.1 282.8,430.6 284.9,430.2 286.2,429.9 286.7,429.8 287.6,429.8 289.9,429.8 292.8,429.8 295.8,429.8 298.1,429.8 299.0,429.8 299.7,430.3 301.5,431.5 304.0,433.1 306.8,434.9 309.4,436.6 311.5,437.8 314.1,439.3 317.0,440.4 318.5,440.8 320.3,441.1 322.3,441.3 324.4,441.6 326.7,441.8 329.1,442.0 331.5,442.3 333.9,442.5 336.2,442.9 338.5,443.3 340.6,443.8 342.7,444.5 344.9,445.2 346.9,446.1 349.0,447.0 351.0,447.9 353.1,448.9 355.1,449.8 357.1,450.7 359.0,451.5 361.0,452.3 363.2,453.0 365.3,453.7 367.4,454.3 369.5,454.8 371.6,455.4 373.7,456.0 375.7,456.6 377.8,457.4 379.9,458.3 382.0,459.4 384.1,460.5 386.1,461.7 388.2,462.9 390.3,464.0 392.5,465.0 394.7,465.8 396.6,466.3 398.6,466.7 400.6,467.0 402.7,467.3 404.7,467.5 406.8,467.7 408.9,467.9 411.0,468.2 413.0,468.6 415.0,469.2 417.1,469.9 419.2,470.8 421.2,471.7 423.3,472.6 425.3,473.7 427.4,474.8 429.4,475.9 431.4,477.0 433.3,478.2 435.3,479.4 437.7,480.9 440.3,482.7 443.0,484.7 445.8,486.7 448.4,488.6 450.6,490.3 452.4,491.7 453.6,492.6 454.0,492.9 456.8,492.2 457.3,491.9 458.6,491.2 460.6,490.2 463.1,488.9 465.8,487.4 468.6,485.8 471.3,484.2 473.7,482.7 475.7,481.3 477.7,479.8 479.7,478.1 481.8,476.4 483.9,474.7 485.9,473.0 488.0,471.4 490.0,469.9 492.0,468.6 494.0,467.5 496.2,466.5 498.4,465.7 500.7,465.1 502.8,464.5 505.0,464.1 507.1,463.8 509.2,463.5 511.6,463.2 513.9,463.0 516.2,462.9 518.6,463.0 521.0,463.5 523.0,464.1 525.0,465.0 527.0,466.1 529.1,467.3 531.2,468.6 533.4,470.0 535.7,471.3 538.0,472.6 539.9,473.6 541.8,474.6 543.8,475.7 545.8,476.8 547.9,478.0 550.0,479.1 552.1,480.2 554.2,481.4 556.4,482.4 558.6,483.5 560.7,484.4 562.9,485.3 565.0,486.1 567.2,486.8 569.6,487.5 572.3,488.2 575.0,488.8 577.8,489.4 580.5,489.9 583.1,490.4 585.5,490.8 587.6,491.2 589.4,491.5 590.8,491.7 591.7,491.9 592.0,491.9 592.4,491.6 593.6,490.8 595.3,489.5 597.6,487.9 600.3,486.0 603.1,483.9 606.1,481.8 609.2,479.6 612.0,477.5 614.7,475.6 617.0,474.0 618.7,472.7 619.9,471.9 620.3,471.6 621.0,471.8 622.8,472.5 625.3,473.5 628.3,474.6 631.2,475.8 633.8,477.0 635.9,478.1 637.9,479.4 639.9,480.8 641.9,482.1 644.1,483.5 646.4,484.9 649.0,486.1 650.7,486.8 652.5,487.5 654.5,488.2 656.5,489.0 658.7,489.7 660.9,490.4 663.1,491.1 665.4,491.7 667.7,492.4 670.0,493.0 672.3,493.6 674.6,494.2 676.8,494.7 678.9,495.2 680.9,495.6 682.8,496.0 684.6,496.3 687.0,496.6 689.3,496.6 691.4,496.6 693.5,496.4 695.6,496.4 697.5,496.4 699.5,496.7 701.5,497.3 703.7,498.4 705.9,499.8 708.1,501.4 710.2,503.3 712.3,505.3 714.3,507.3 716.4,509.4 718.4,511.5 720.6,513.8 722.8,516.2 725.0,518.7 727.1,521.3 729.2,523.9 731.3,526.6 733.3,529.2 735.3,531.8 737.7,535.0 740.0,538.2 742.2,541.4 744.4,544.7 746.6,548.2 748.8,552.0 750.8,555.9 752.7,560.2 754.6,564.8 756.5,569.7 758.4,574.5 760.4,579.2 762.4,583.6 764.6,587.6 766.9,591.0 768.9,593.4 770.9,595.6 773.1,597.6 775.3,599.5 777.5,601.1 779.7,602.5 781.8,603.7 783.8,604.5 785.9,605.1 787.8,605.4 789.8,605.4 791.8,605.1 794.0,604.5 795.9,603.7 797.9,602.6 800.1,601.3 802.3,599.7 804.6,597.9 806.9,596.1 809.2,594.1 811.5,592.0 813.7,589.9 815.8,587.9 817.7,585.9 820.2,583.3 822.5,580.7 824.7,578.0 826.9,575.3 828.9,572.4 830.9,569.3 832.8,565.9 834.6,562.2 837.3,554.7 839.7,545.8 841.7,536.0 843.7,525.9 845.5,516.4 847.6,508.0 849.8,501.3 852.5,496.2 855.5,491.7 858.0,488.4 859.0,487.1 860.0,487.5 862.6,488.6 865.7,490.5 868.4,492.9 870.7,496.3 872.9,500.8 875.1,506.2 877.2,512.1 879.3,518.4 881.3,524.8 883.3,531.0 885.3,536.9 887.5,543.6 889.6,550.5 891.7,557.6 893.7,564.5 895.8,571.1 897.9,577.2 900.0,582.5 901.8,586.7 903.3,590.5 905.0,593.9 907.2,596.8 910.1,599.4 911.6,600.3 913.2,601.2 915.0,602.0 917.0,602.8 919.1,603.6 921.3,604.3 923.6,604.9 925.9,605.4 928.3,605.8 930.7,606.2 933.0,606.5 935.4,606.6 937.7,606.6 939.8,606.6 941.9,606.3 943.9,606.0 945.7,605.5 948.1,604.4 950.4,602.9 952.5,600.9 954.5,598.7 956.5,596.3 958.4,593.8 960.2,591.2 962.0,588.7 963.9,586.4 965.8,584.3 967.7,582.5 969.8,580.8 971.9,579.2 973.9,577.6 976.0,576.2 978.1,575.0 980.2,573.9 982.3,573.0 984.6,572.4 986.5,572.2 988.6,572.2 990.7,572.5 992.8,572.9 995.0,573.4 997.1,573.9 999.2,574.4 1001.3,574.8 1003.1,575.1 1004.9,575.1 1007.1,574.9 1009.1,574.4 1011.0,573.9 1012.9,573.2 1015.0,572.4 1017.0,571.5 1019.1,570.5 1021.3,569.3 1023.5,568.0 1025.7,566.7 1027.9,565.6 1030.0,564.6 1032.0,563.9 1034.5,563.4 1037.2,563.1 1039.6,562.9 1041.4,562.9 1042.1,562.9" fill="none" stroke="#ff00ff" stroke-width="1" stroke-linejoin="round" shape-rendering="crispEdges"/>
<polyline points="4.0,487.0 4.5,486.8 5.9,486.3 7.9,485.5 10.4,484.6 13.3,483.5 16.2,482.3 19.0,481.1 21.6,480.0 23.7,479.0 25.9,477.7 27.9,476.5 29.7,475.2 31.6,473.9 33.8,472.6 35.7,471.6 37.7,470.6 39.8,469.6 41.9,468.6 44.1,467.6 46.3,466.7 48.5,465.8 50.7,465.0 52.8,464.3 55.0,463.7 57.1,463.2 59.3,462.7 61.5,462.2 63.6,461.7 65.7,461.2 67.7,460.7 70.0,460.0 72.3,459.3 74.4,458.6 76.6,457.9 78.9,457.2 81.2,456.7 83.2,456.3 85.2,455.9 87.3,455.6 89.4,455.3 91.5,455.0 93.6,454.8 95.8,454.7 98.0,454.7 100.0,454.8 102.0,454.9 104.0,455.2 106.1,455.5 108.2,455.8 110.3,456.1 112.4,456.5 114.4,456.8 116.4,457.1 118.4,457.4 120.6,457.6 122.7,457.9 124.7,458.1 126.7,458.3 128.8,458.5 130.9,458.7 133.0,458.9 135.3,459.0 137.4,459.1 139.7,459.1 142.3,459.1 145.0,459.2 147.8,459.1 150.4,459.1 153.0,459.1 155.3,459.1 157.2,459.0 158.7,459.0 159.7,459.0 160.0,459.0 161.8,459.0 165.2,459.0 167.0,459.0 167.5,458.8 168.9,458.4 170.9,457.8 173.4,457.0 176.2,456.2 179.0,455.4 181.7,454.6 184.0,454.0 186.0,453.5 188.0,453.1 190.0,452.8 192.0,452.4 194.0,452.1 196.0,451.8 198.0,451.4 200.0,451.0 202.1,450.5 204.3,450.1 206.4,449.6 208.6,449.0 210.8,448.5 213.0,448.1 215.3,447.6 217.7,447.2 219.7,446.9 221.9,446.6 224.1,446.4 226.4,446.2 228.8,445.9 231.1,445.7 233.5,445.5 235.7,445.4 237.9,445.2 239.9,445.0 241.7,444.9 243.4,444.7 245.6,444.4 247.4,444.2 249.2,444.0 251.5,443.8 252.9,443.7 254.5,443.6 256.3,443.6 258.2,443.5 260.2,443.5 262.4,443.5 264.6,443.4 266.8,443.4 269.1,443.3 271.4,443.3 273.8,443.2 276.1,443.1 278.3,443.0 280.6,442.9 282.7,442.7 284.8,442.5 286.7,442.3 288.9,442.0 291.1,441.6 293.2,441.2 295.2,440.7 297.3,440.2 299.3,439.7 301.3,439.2 303.3,438.7 305.3,438.1 307.3,437.6 309.4,437.1 311.5,436.6 313.5,436.2 315.5,435.7 317.5,435.2 319.5,434.8 321.5,434.3 323.6,433.8 325.6,433.4 327.7,432.9 329.8,432.5 331.8,432.0 333.9,431.6 335.9,431.2 338.0,430.8 340.0,430.4 342.1,430.0 344.3,429.6 346.4,429.2 348.5,428.8 350.7,428.5 352.8,428.1 354.9,427.8 357.1,427.4 359.2,427.1 361.3,426.9 363.5,426.6 365.6,426.4 367.7,426.2 369.8,426.0 371.9,425.9 374.0,425.8 376.1,425.7 378.2,425.6 380.3,425.5 382.4,425.5 384.5,425.5 386.5,425.5 388.6,425.5 390.7,425.6 392.7,425.7 394.7,425.9 396.9,426.1 399.1,426.4 401.3,426.7 403.5,427.1 405.6,427.5 407.7,427.9 409.9,428.4 412.0,428.9 414.1,429.3 416.3,429.8 418.4,430.3 420.6,430.8 422.7,431.4 424.9,432.0 427.1,432.7 429.3,433.3 431.5,434.0 433.6,434.6 435.8,435.2 437.9,435.7 440.0,436.1 442.0,436.4 444.1,436.6 446.2,436.8 448.3,436.9 450.4,437.0 452.5,436.9 454.5,436.9 456.4,436.8 458.2,436.6 460.0,436.4 462.2,436.0 464.1,435.4 466.0,434.8 468.0,434.2 470.3,433.7 472.1,433.4 474.0,433.1 476.0,432.9 478.1,432.7 480.3,432.5 482.6,432.3 484.8,432.1 487.2,431.9 489.5,431.7 491.8,431.5 494.0,431.3 496.1,431.1 498.2,430.9 500.4,430.6 502.6,430.4 504.8,430.1 507.1,429.9 509.3,429.6 511.5,429.4 513.6,429.2 515.6,429.0 517.5,428.8 519.3,428.7 521.0,428.6 523.3,428.5 525.2,428.3 527.1,428.2 529.0,428.3 531.2,428.6 533.0,429.0 535.0,429.6 537.0,430.4 539.2,431.3 541.4,432.2 543.7,433.2 546.0,434.2 548.3,435.1 550.5,435.9 552.8,436.5 554.9,437.0 557.0,437.3 559.1,437.5 561.1,437.6 563.2,437.7 565.2,437.7 567.3,437.6 569.3,437.5 571.3,437.4 573.3,437.2 575.2,437.0 577.4,436.7 579.5,436.4 581.6,436.0 583.7,435.5 585.7,435.0 587.8,434.6 589.9,434.1 592.0,433.7 594.0,433.4 596.1,433.1 598.1,432.8 600.2,432.5 602.3,432.2 604.4,431.9 606.3,431.6 608.2,431.3 610.0,431.0 612.2,430.5 614.1,430.0 615.9,429.6 617.9,429.1 620.3,428.6 621.8,428.3 623.5,428.1 625.2,427.8 627.1,427.6 629.0,427.4 631.0,427.1 633.0,426.9 635.1,426.6 637.3,426.4 639.5,426.2 641.7,426.0 643.9,425.8 646.2,425.6 648.4,425.4 650.7,425.2 652.6,425.0 654.5,424.9 656.5,424.7 658.5,424.6 660.6,424.4 662.7,424.2 664.9,424.1 667.1,423.9 669.2,423.8 671.5,423.6 673.7,423.5 675.9,423.3 678.1,423.2 680.2,423.1 682.4,423.0 684.5,422.9 686.6,422.9 688.7,422.8 690.7,422.8 692.6,422.8 694.5,422.8 696.4,422.8 698.1,422.9 700.5,423.1 702.8,423.3 705.0,423.6 707.1,423.9 709.1,424.2 711.1,424.6 713.1,425.0 715.1,425.3 717.3,425.7 719.5,426.0 721.8,426.2 723.6,426.3 725.6,426.4 727.6,426.5 729.7,426.5 731.8,426.6 734.0,426.6 736.3,426.6 738.5,426.6 740.8,426.6 743.0,426.5 745.2,426.6 747.4,426.6 749.5,426.6 751.5,426.7 753.4,426.8 755.3,426.9 757.0,427.1 758.6,427.3 760.0,427.6 762.4,428.3 764.4,429.2 766.1,430.1 768.0,431.1 770.3,432.0 771.8,432.5 773.5,433.0 775.3,433.6 777.3,434.1 779.3,434.7 781.3,435.3 783.5,435.8 785.7,436.4 787.9,436.9 790.1,437.4 792.3,437.8 794.5,438.1 796.6,438.4 798.7,438.7 800.7,438.8 802.8,438.8 804.9,438.8 807.0,438.6 809.1,438.4 811.2,438.1 813.3,437.8 815.4,437.4 817.4,437.0 819.5,436.6 821.6,436.3 823.6,435.9 825.7,435.6 827.8,435.4 829.9,435.2 832.0,435.0 834.1,434.8 836.2,434.6 838.3,434.3 840.4,434.2 842.5,434.0 844.6,433.8 846.7,433.7 848.8,433.6 850.8,433.6 852.9,433.6 854.9,433.7 857.1,433.9 859.3,434.1 861.5,434.4 863.7,434.8 865.9,435.3 868.0,435.7 870.1,436.2 872.3,436.6 874.4,437.0 876.5,437.4 878.6,437.7 880.8,438.0 882.9,438.2 885.0,438.5 887.0,438.7 889.1,438.9 891.2,439.1 893.3,439.3 895.5,439.5 897.7,439.7 900.0,439.8 901.8,439.9 903.8,440.0 905.7,440.2 907.8,440.3 909.9,440.4 912.0,440.5 914.1,440.6 916.2,440.7 918.3,440.8 920.4,440.9 922.5,440.9 924.6,440.9 926.6,440.8 928.5,440.7 930.3,440.6 932.1,440.4 934.4,440.0 936.5,439.5 938.5,438.9 940.4,438.3 942.3,437.6 944.2,436.9 946.2,436.3 948.4,435.8 950.7,435.4 952.5,435.2 954.4,435.0 956.5,434.9 958.6,434.8 960.8,434.7 963.1,434.6 965.5,434.6 967.8,434.6 970.2,434.6 972.5,434.6 974.8,434.7 977.1,434.8 979.2,434.8 981.3,434.9 983.2,435.0 985.0,435.2 986.6,435.3 988.0,435.4 990.9,435.8 993.6,436.3 995.6,436.8 996.4,437.0 997.3,438.2 999.5,441.5 1002.5,446.0 1005.6,451.0 1008.3,455.7 1010.6,460.6 1012.9,465.9 1015.1,471.5 1017.3,477.2 1019.6,482.7 1021.8,487.8 1024.5,493.4 1027.6,499.5 1030.6,505.1 1032.7,509.2 1033.6,510.8 1034.9,511.3 1037.8,512.5 1040.8,513.7 1042.1,514.2" fill="none" stroke="#00e4ff" stroke-width="2" stroke-linejoin="round" shape-rendering="crispEdges"/>
<polyline points="4.0,512.0 4.7,512.0 6.5,512.0 9.1,512.0 12.2,512.0 15.5,512.0 18.6,512.0 21.2,512.0 23.0,512.0 23.7,512.0 24.4,511.6 26.3,510.5 28.8,509.1 31.4,507.6 33.8,506.4 36.1,505.4 38.8,504.3 41.4,503.4 43.3,502.7 44.0,502.4 45.7,502.4 49.0,502.4 50.7,502.4 51.2,501.6 52.4,499.3 54.4,495.9 56.8,491.5 59.6,486.4 62.7,481.0 65.8,475.4 68.9,470.0 71.7,464.9 74.1,460.5 76.1,457.1 77.3,454.8 77.8,454.0 79.3,453.7 82.5,453.2 85.8,452.6 87.3,452.3 88.4,453.5 91.1,456.4 94.2,459.9 96.9,462.8 98.0,464.0 98.8,466.0 101.0,471.1 104.0,478.0 107.3,485.6 110.3,492.5 112.5,497.6 113.3,499.6 114.4,500.7 116.9,503.4 119.9,506.7 122.4,509.4 123.5,510.5 124.7,509.7 127.7,507.9 131.1,505.6 134.1,503.8 135.3,503.0 136.4,502.5 138.9,501.5 141.9,500.1 144.4,499.1 145.5,498.6 146.3,498.7 148.4,499.0 151.2,499.4 154.3,499.9 157.1,500.3 159.2,500.6 160.0,500.7 161.5,501.7 164.6,504.1 167.8,506.4 169.3,507.4 170.1,505.8 172.1,501.6 175.0,495.6 178.2,488.8 181.5,482.0 184.4,476.0 186.4,471.8 187.2,470.2 188.3,469.9 190.8,469.2 193.8,468.5 196.3,467.8 197.4,467.5 198.1,467.6 200.0,467.8 202.7,468.0 205.8,468.4 209.0,468.7 211.7,468.9 213.6,469.1 214.3,469.2 215.3,468.4 217.8,466.6 221.1,464.1 224.3,461.6 226.8,459.8 227.8,459.0 228.5,458.5 230.4,457.0 233.1,455.0 236.2,452.8 239.3,450.5 242.0,448.5 243.9,447.0 244.6,446.5 246.5,446.5 250.1,446.5 252.0,446.5 253.0,447.4 255.5,449.5 258.5,452.0 261.0,454.1 262.0,455.0 263.1,455.0 265.9,455.0 269.1,455.0 271.9,455.0 273.0,455.0 274.0,454.3 276.6,452.5 279.8,450.2 283.1,447.8 285.7,446.0 286.7,445.3 287.9,445.4 290.7,445.5 294.0,445.7 296.8,445.8 298.0,445.9 300.5,450.5 302.9,455.0 304.7,457.8 308.2,463.0 310.0,465.8 311.3,467.6 314.3,471.4 317.3,475.2 318.6,477.0 319.9,477.2 322.8,477.7 325.7,478.1 327.0,478.3 327.6,478.7 329.1,479.7 331.3,481.3 334.1,483.2 337.2,485.3 340.5,487.6 343.6,489.7 346.4,491.6 348.6,493.2 350.1,494.2 350.7,494.6 351.9,496.0 354.9,499.3 358.4,503.3 361.4,506.6 362.6,508.0 363.2,508.4 364.9,509.5 367.4,511.1 370.4,513.0 373.4,515.0 376.4,516.9 378.9,518.5 380.6,519.6 381.2,520.0 382.4,522.3 385.4,527.7 388.8,534.3 391.8,539.7 393.0,542.0 393.6,542.7 395.3,544.5 397.8,547.2 400.8,550.4 403.8,553.8 406.8,557.0 409.3,559.7 411.0,561.5 411.6,562.2 412.2,563.1 413.9,565.4 416.4,568.8 419.4,572.8 422.4,577.0 425.4,581.0 427.9,584.4 429.6,586.7 430.2,587.6 431.2,588.9 433.7,592.0 437.0,596.0 440.3,600.1 442.8,603.2 443.8,604.5 444.9,605.1 447.4,606.4 450.4,608.1 452.9,609.4 454.0,610.0 454.3,609.0 455.3,606.3 456.7,602.0 458.6,596.4 460.9,589.6 463.5,582.0 466.3,573.7 469.3,565.0 472.3,556.0 475.3,547.0 478.3,538.3 481.1,530.0 483.7,522.4 486.0,515.6 487.9,510.0 489.3,505.7 490.3,503.0 490.6,502.0 491.3,501.2 493.0,499.1 495.4,496.3 498.1,493.5 500.7,491.2 502.6,489.8 504.6,488.3 506.8,486.8 509.1,485.4 511.4,484.2 513.6,483.3 515.7,482.7 517.7,482.7 520.3,483.6 522.8,485.4 525.2,487.7 527.4,490.3 529.5,492.9 532.3,497.1 535.1,502.1 537.2,506.3 538.0,508.1 538.6,508.8 540.3,510.5 542.8,513.0 545.7,515.9 548.7,518.9 551.5,521.6 553.4,523.4 555.5,525.2 557.7,527.0 559.9,528.9 562.2,530.9 564.5,532.8 566.8,534.9 569.1,536.9 571.2,539.1 573.3,541.3 575.2,543.6 577.9,547.4 580.7,552.1 583.6,557.1 586.2,562.1 588.5,566.7 590.3,570.5 591.6,573.1 592.0,574.0 592.4,573.0 593.6,570.1 595.3,565.6 597.6,559.9 600.3,553.3 603.1,546.1 606.1,538.5 609.2,530.9 612.0,523.7 614.7,517.1 617.0,511.4 618.7,506.9 619.9,504.0 620.3,503.0 621.3,503.8 623.6,505.8 626.4,508.6 628.8,511.5 631.3,515.9 634.0,521.6 636.4,527.3 638.2,531.7 638.9,533.5 639.8,534.9 641.9,538.1 644.7,542.0 647.4,545.3 649.6,547.3 652.3,549.4 654.8,551.3 656.7,552.6 657.5,553.1 658.2,553.1 660.1,553.1 662.8,553.1 666.0,553.1 669.1,553.1 671.8,553.1 673.7,553.1 674.4,553.1 675.5,553.4 678.0,554.2 681.0,555.0 683.5,555.8 684.6,556.1 685.9,555.7 688.8,554.9 691.7,554.2 693.0,553.8 694.3,554.2 697.2,555.0 700.2,555.7 701.5,556.1 702.8,558.6 705.7,564.2 708.7,569.9 710.0,572.4 711.2,573.6 714.2,576.6 717.6,580.0 720.6,583.0 721.8,584.2 722.6,584.3 724.8,584.6 727.8,584.9 731.0,585.3 734.0,585.6 736.2,585.9 737.0,586.0 738.2,586.9 741.2,589.0 744.6,591.4 747.6,593.5 748.8,594.4 749.2,594.8 750.4,595.9 752.2,597.5 754.4,599.4 757.0,601.5 759.6,603.5 762.3,605.2 764.8,606.5 766.9,607.2 769.2,607.3 771.5,606.9 773.7,606.2 775.9,605.2 778.2,604.1 780.4,602.8 782.5,601.4 784.7,599.9 786.9,598.1 789.0,596.2 791.1,594.1 793.3,592.0 795.4,589.8 797.4,587.6 799.6,585.2 801.8,582.7 804.0,580.1 806.1,577.4 808.2,574.7 810.3,571.8 812.3,568.8 814.3,565.6 816.6,561.6 818.8,557.4 821.0,552.9 823.1,548.4 825.2,543.6 827.2,538.7 829.2,533.6 831.2,528.4 833.4,522.0 835.5,514.7 837.5,507.0 839.5,499.0 841.5,491.1 843.5,483.7 845.5,477.1 847.6,471.6 849.8,467.5 852.3,464.7 855.1,462.6 857.4,461.2 858.3,460.7 859.0,461.5 860.9,463.6 863.4,466.7 866.1,470.4 868.4,474.3 870.6,479.3 872.8,485.2 875.0,491.8 877.1,499.0 879.2,506.5 881.3,514.0 883.3,521.4 885.3,528.4 887.5,536.2 889.6,544.2 891.6,552.4 893.7,560.3 895.7,567.9 897.8,574.8 900.0,580.8 901.9,585.3 903.6,589.3 905.5,592.9 907.6,596.2 910.1,599.4 912.0,601.4 914.0,603.5 916.2,605.5 918.5,607.3 920.9,609.0 923.3,610.4 925.6,611.4 928.0,612.0 930.2,612.1 932.4,611.9 934.7,611.4 937.0,610.7 939.3,609.8 941.5,608.7 943.7,607.5 945.7,606.2 948.1,604.4 950.3,602.2 952.4,599.8 954.5,597.3 956.5,594.6 958.6,591.9 960.9,589.3 962.8,587.2 964.9,585.1 967.0,583.0 969.1,580.8 971.2,578.6 973.4,576.4 975.5,574.1 977.5,571.9 979.4,569.6 981.2,567.3 983.7,563.7 986.0,560.0 988.1,556.3 990.2,552.5 992.3,548.9 994.7,545.3 996.7,542.7 998.7,540.2 1000.8,537.8 1002.9,535.4 1005.1,533.0 1007.3,530.4 1009.5,527.8 1011.6,525.0 1013.7,521.9 1015.9,518.5 1018.2,514.7 1020.5,510.8 1022.7,506.9 1024.9,503.2 1027.0,499.8 1028.9,496.9 1030.6,494.5 1032.0,492.9 1035.3,491.2 1037.1,492.1 1040.3,493.7 1042.1,494.6" fill="none" stroke="#ffff00" stroke-width="2" stroke-linejoin="round" shape-rendering="crispEdges"/>
<polyline points="443.8,604.5 449,607.5 455,609.6" fill="none" stroke="#ff0000" stroke-width="2.5" shape-rendering="auto"/>
<polyline points="766.9,607.6 772,606.5 778.8,604.5" fill="none" stroke="#ff0000" stroke-width="2.5" shape-rendering="auto"/>
<rect x="910" y="594" width="36" height="32" fill="#a8d4f0"/>
<rect x="911" y="584" width="7" height="42" fill="#a8f000"/>
<rect x="920" y="584" width="7" height="42" fill="#a8f000"/>
<rect x="929" y="584" width="7" height="42" fill="#a8f000"/>
<rect x="938" y="584" width="7" height="42" fill="#a8f000"/>
<path d="M913,608 Q928,622 943,607" fill="none" stroke="#ff1010" stroke-width="3" shape-rendering="auto"/>
<rect x="217.5" y="416.5" width="102" height="10" fill="none" stroke="#00ffff" stroke-width="1"/>
<rect x="226" y="417" width="1" height="10" fill="#00ffff"/>
<rect x="235" y="417" width="1" height="10" fill="#00ffff"/>
<rect x="263" y="417" width="1" height="10" fill="#00ffff"/>
<rect x="272" y="417" width="1" height="10" fill="#00ffff"/>
<rect x="295" y="416" width="25" height="11" fill="#00ff00"/>
<path d="M704,382 H714 L717,385 V395 H704 Z" fill="#0a3c78"/>
<path d="M861,382 H871 L874,385 V395 H861 Z" fill="#008000"/>
<rect x="943" y="382" width="12" height="13" fill="#800000"/>
<path d="M955,382 H965 L968,385 V395 H955 Z" fill="#8b4a10"/>
<rect x="1076" y="362" width="50" height="16" fill="#00007f"/>
<rect x="1075.5" y="362.5" width="51" height="16" fill="none" stroke="#c00000"/>
<rect x="925" y="631" width="50" height="15" fill="#00007f"/>
<path d="M858.5,42 L869,45.5 M858.5,42 L858.5,38 M858.5,42 L862,39.5 M858.5,42 L861,45" stroke="#d0d0d0" stroke-width="1" fill="none" shape-rendering="auto"/>
<path d="M924,377.5 H935 M924,377.5 L927,374.5 M924,377.5 L927,380.5" stroke="#d0d0d0" stroke-width="1" fill="none" shape-rendering="auto"/>
<rect x="150" y="630" width="1" height="20" fill="#c00000"/>
<rect x="334" y="630" width="1" height="20" fill="#c00000"/>
<rect x="546" y="630" width="1" height="20" fill="#c00000"/>
<rect x="739" y="630" width="1" height="20" fill="#c00000"/>
<rect x="196" y="631" width="1" height="2" fill="#c00000"/>
<rect x="242" y="631" width="1" height="2" fill="#c00000"/>
<rect x="288" y="631" width="1" height="2" fill="#c00000"/>
<rect x="388" y="631" width="1" height="2" fill="#c00000"/>
<rect x="440" y="631" width="1" height="2" fill="#c00000"/>
<rect x="492" y="631" width="1" height="2" fill="#c00000"/>
<rect x="594" y="631" width="1" height="2" fill="#c00000"/>
<rect x="642" y="631" width="1" height="2" fill="#c00000"/>
<rect x="690" y="631" width="1" height="2" fill="#c00000"/>
<rect x="789" y="631" width="1" height="2" fill="#c00000"/>
<rect x="840" y="631" width="1" height="2" fill="#c00000"/>
<rect x="890" y="631" width="1" height="2" fill="#c00000"/>
<rect x="42" y="646" width="1" height="4" fill="#c00000"/>
<rect x="73" y="646" width="1" height="4" fill="#c00000"/>
<rect x="115" y="646" width="1" height="4" fill="#c00000"/>
<rect x="145" y="646" width="1" height="4" fill="#c00000"/>
<rect x="177" y="646" width="1" height="4" fill="#c00000"/>
<rect x="207" y="646" width="1" height="4" fill="#c00000"/>
<rect x="242" y="646" width="1" height="4" fill="#c00000"/>
<rect x="282" y="646" width="1" height="4" fill="#c00000"/>
<rect x="308" y="646" width="1" height="4" fill="#c00000"/>
<rect x="364" y="646" width="1" height="4" fill="#c00000"/>
<rect x="390" y="646" width="1" height="4" fill="#c00000"/>
<rect x="422" y="646" width="1" height="4" fill="#c00000"/>
<rect x="480" y="646" width="1" height="4" fill="#c00000"/>
<rect x="508" y="646" width="1" height="4" fill="#c00000"/>
<rect x="536" y="646" width="1" height="4" fill="#c00000"/>
<rect x="568" y="646" width="1" height="4" fill="#c00000"/>
<rect x="628" y="646" width="1" height="4" fill="#c00000"/>
<rect x="664" y="646" width="1" height="4" fill="#c00000"/>
<rect x="696" y="646" width="1" height="4" fill="#c00000"/>
<rect x="766" y="646" width="1" height="4" fill="#c00000"/>
<rect x="839" y="646" width="1" height="4" fill="#c00000"/>
<rect x="871" y="646" width="1" height="4" fill="#c00000"/>
<rect x="5.5" y="3.5" width="11" height="10" rx="2.5" fill="none" stroke="#909090" stroke-width="1.2" shape-rendering="auto"/>
<rect x="12" y="5" width="3" height="7" fill="#a0a0a0"/>
<rect x="1060.5" y="24.5" width="11" height="10" rx="2.5" fill="none" stroke="#909090" stroke-width="1.2" shape-rendering="auto"/>
<rect x="1067" y="26" width="3" height="7" fill="#a0a0a0"/>
<path d="M1047,24 L1052.5,29.5 L1047,35 L1041.5,29.5 Z" fill="none" stroke="#b0b0b0" stroke-width="1" shape-rendering="auto"/>
<circle cx="134" cy="29" r="6" fill="#808080" shape-rendering="auto"/><path d="M131,28 L134,31 L137,28" stroke="#202020" stroke-width="1.2" fill="none" shape-rendering="auto"/>
<circle cx="8" cy="404" r="6" fill="#808080" shape-rendering="auto"/><path d="M5,403 L8,406 L11,403" stroke="#202020" stroke-width="1.2" fill="none" shape-rendering="auto"/>
</svg>
<div class="t" style="left:28px;top:4px;color:#c8c8c8;">分时</div>
<div class="t" style="left:61px;top:4px;color:#c8c8c8;">1分钟</div>
<div class="t" style="left:100px;top:4px;color:#c8c8c8;">5分钟</div>
<div class="t" style="left:139px;top:4px;color:#c8c8c8;">15分钟</div>
<div class="t" style="left:185px;top:4px;color:#c8c8c8;">30分钟</div>
<div class="t" style="left:231px;top:4px;color:#c8c8c8;">60分钟</div>
<div class="t" style="left:278px;top:4px;color:#00e8ff;">日线</div>
<div class="t" style="left:311px;top:4px;color:#c8c8c8;">周线</div>
<div class="t" style="left:345px;top:4px;color:#c8c8c8;">月线</div>
<div class="t" style="left:378px;top:4px;color:#c8c8c8;">多周期</div>
<div class="t" style="left:422px;top:4px;color:#c8c8c8;">更多</div>
<div class="t" style="left:449px;top:4px;color:#c8c8c8;font-size:13px">&gt;</div>
<div class="t" style="left:811px;width:33px;text-align:center;top:4px;color:#c8c8c8">复权</div>
<div class="t" style="left:845px;width:34px;text-align:center;top:4px;color:#c8c8c8">叠加</div>
<div class="t" style="left:880px;width:34px;text-align:center;top:4px;color:#c8c8c8">多股</div>
<div class="t" style="left:915px;width:34px;text-align:center;top:4px;color:#c8c8c8">统计</div>
<div class="t" style="left:950px;width:34px;text-align:center;top:4px;color:#c8c8c8">画线</div>
<div class="t" style="left:985px;width:34px;text-align:center;top:4px;color:#c8c8c8">F10</div>
<div class="t" style="left:1020px;width:34px;text-align:center;top:4px;color:#c8c8c8">标记</div>
<div class="t" style="left:1055px;width:34px;text-align:center;top:4px;color:#c8c8c8">+自选</div>
<div class="t" style="left:1090px;width:36px;text-align:center;top:4px;color:#c8c8c8">返回</div>
<div class="t" style="left:3px;top:24px;color:#c8c8c8;">津投城开(日线,前复权)</div>
<div class="t" style="left:1080px;width:40px;text-align:right;top:41px;color:#ff3232">3.60</div>
<div class="t" style="left:1080px;width:40px;text-align:right;top:65px;color:#ff3232">3.50</div>
<div class="t" style="left:1080px;width:40px;text-align:right;top:89px;color:#ff3232">3.40</div>
<div class="t" style="left:1080px;width:40px;text-align:right;top:114px;color:#ff3232">3.30</div>
<div class="t" style="left:1080px;width:40px;text-align:right;top:138px;color:#ff3232">3.20</div>
<div class="t" style="left:1080px;width:40px;text-align:right;top:162px;color:#ff3232">3.10</div>
<div class="t" style="left:1080px;width:40px;text-align:right;top:186px;color:#ff3232">3.00</div>
<div class="t" style="left:1080px;width:40px;text-align:right;top:211px;color:#ff3232">2.90</div>
<div class="t" style="left:1080px;width:40px;text-align:right;top:235px;color:#ff3232">2.80</div>
<div class="t" style="left:1080px;width:40px;text-align:right;top:259px;color:#ff3232">2.70</div>
<div class="t" style="left:1080px;width:40px;text-align:right;top:283px;color:#ff3232">2.60</div>
<div class="t" style="left:1080px;width:40px;text-align:right;top:308px;color:#ff3232">2.50</div>
<div class="t" style="left:1080px;width:40px;text-align:right;top:332px;color:#ff3232">2.40</div>
<div class="t" style="left:1080px;width:40px;text-align:right;top:413px;color:#ff3232">100.0</div>
<div class="t" style="left:1080px;width:40px;text-align:right;top:454px;color:#ff3232">80.00</div>
<div class="t" style="left:1080px;width:40px;text-align:right;top:496px;color:#ff3232">60.00</div>
<div class="t" style="left:1080px;width:40px;text-align:right;top:538px;color:#ff3232">40.00</div>
<div class="t" style="left:1080px;width:40px;text-align:right;top:580px;color:#ff3232">20.00</div>
<div class="t" style="left:18px;top:398px;color:#c8c8c8;">股朋指标网</div>
<div class="t" style="left:82px;top:398px;color:#ffff00;">阳光: 62.50</div>
<div class="t" style="left:148px;top:398px;color:#ff00ff;">空气: 29.88</div>
<div class="t" style="left:215px;top:398px;color:#ffffff;">雨露: 34.94</div>
<div class="t" style="left:280px;top:398px;color:#00e8e8;">自然环境: 53.30</div>
<div class="t" style="left:370px;top:398px;color:#c8c8c8;">稻草人: 0.00</div>
<div class="t" style="left:441px;top:398px;color:#0000ff;">麦田: 0.00</div>
<div class="t" style="left:500px;top:398px;color:#ffffff;">早熟: 0.00</div>
<div class="t" style="left:559px;top:398px;color:#ffff00;">光合作用: 0.00</div>
<div class="t" style="left:643px;top:398px;color:#ff00ff;">乌鸦: 0.00</div>
<div class="t" style="left:701px;top:398px;color:#00ff00;">暴风雨: 0.00</div>
<div class="t" style="left:773px;top:398px;color:#c8c8c8;">收割: 0.00</div>
<div class="t" style="left:873px;top:40px;color:#d0d0d0;">3.62</div>
<div class="t" style="left:937px;top:373px;color:#d0d0d0;">2.23</div>
<div class="t" style="left:705px;top:383px;color:#ffffff;font-size:11.5px;line-height:12px">财</div>
<div class="t" style="left:862px;top:383px;color:#ffffff;font-size:11.5px;line-height:12px">跌</div>
<div class="t" style="left:944px;top:383px;color:#ffffff;font-size:11.5px;line-height:12px">涨榜</div>
<div class="t" style="left:1078px;top:364px;color:#e0e0e0;">2.23</div>
<div class="t" style="left:261px;top:431px;color:#ffff00;">收割</div>
<div class="t" style="left:5px;top:634px;color:#ff3232;">2025年</div>
<div class="t" style="left:152px;top:634px;color:#ff3232;">6</div>
<div class="t" style="left:336px;top:634px;color:#ff3232;">7</div>
<div class="t" style="left:548px;top:634px;color:#ff3232;">8</div>
<div class="t" style="left:741px;top:634px;color:#ff3232;">9</div>
<div class="t" style="left:926px;top:634px;color:#ffffff;letter-spacing:-0.3px">2025/09.</div>
<div style="position:absolute;left:971px;top:600px;width:159px;height:50px;background:#3c3636"></div>
<div class="t" style="left:971px;width:159px;text-align:center;top:606px;color:#f4f4f4;font-size:18px;line-height:20px;font-weight:bold">指标公式网</div>
<div class="t" style="left:974px;width:159px;text-align:center;top:628px;color:#f4f4f4;font-size:16.5px;line-height:16px">www.zbgs3.com</div>
</body></html>
